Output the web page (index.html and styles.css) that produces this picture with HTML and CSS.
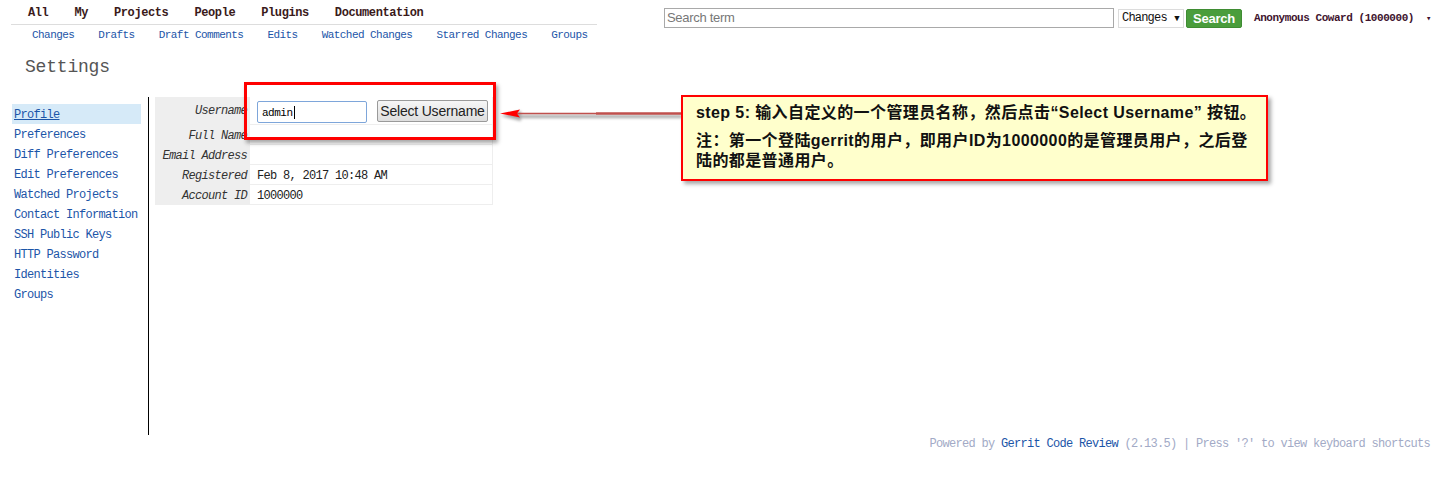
FILE: index.html
```html
<!DOCTYPE html>
<html lang="zh-CN">
<head>
<meta charset="utf-8">
<title>Settings</title>
<link rel="stylesheet" href="styles.css">
</head>
<body>
<div class="page">
  <header class="top">
    <div class="menus">
      <nav class="mainmenu">
        <a>All</a><a>My</a><a>Projects</a><a>People</a><a>Plugins</a><a>Documentation</a>
      </nav>
      <nav class="submenu">
        <a>Changes</a><a>Drafts</a><a>Draft Comments</a><a>Edits</a><a>Watched Changes</a><a>Starred Changes</a><a>Groups</a>
      </nav>
    </div>
    <div class="search">
      <div class="search-input">Search term</div>
      <div class="search-select">Changes <span class="tri">▼</span></div>
      <div class="search-btn">Search</div>
      <div class="user">Anonymous Coward (1000000)</div>
      <div class="user-arrow">▾</div>
    </div>
  </header>

  <h1 class="title">Settings</h1>

  <div class="content">
    <aside class="sidebar">
      <a class="side-item active">Profile</a>
      <a class="side-item">Preferences</a>
      <a class="side-item">Diff Preferences</a>
      <a class="side-item">Edit Preferences</a>
      <a class="side-item">Watched Projects</a>
      <a class="side-item">Contact Information</a>
      <a class="side-item">SSH Public Keys</a>
      <a class="side-item">HTTP Password</a>
      <a class="side-item">Identities</a>
      <a class="side-item">Groups</a>
    </aside>
    <div class="profile">
      <div class="row first">
        <div class="label">Username</div>
        <div class="value">
          <div class="uname-input">admin<span class="caret"></span></div>
          <div class="select-btn">Select Username</div>
        </div>
      </div>
      <div class="row">
        <div class="label">Full Name</div>
        <div class="value"></div>
      </div>
      <div class="row">
        <div class="label">Email Address</div>
        <div class="value"></div>
      </div>
      <div class="row">
        <div class="label">Registered</div>
        <div class="value">Feb 8, 2017 10:48 AM</div>
      </div>
      <div class="row">
        <div class="label">Account ID</div>
        <div class="value">1000000</div>
      </div>
    </div>
  </div>

  <footer class="footer">
    Powered by <a class="gerrit">Gerrit Code Review</a> (2.13.5) | Press '?' to view keyboard shortcuts
  </footer>

  <div class="hl-box"></div>
  <svg class="arrow" width="190" height="20" viewBox="0 0 190 20">
    <defs>
      <filter id="sh" x="-10%" y="-100%" width="120%" height="400%">
        <feGaussianBlur stdDeviation="1.5"/>
      </filter>
    </defs>
    <g filter="url(#sh)" opacity="0.35">
      <line x1="22" y1="11.5" x2="186" y2="11.5" stroke="#000" stroke-width="3"/>
      <polygon points="5,11 25,6 25,16" fill="#000"/>
    </g>
    <line x1="20" y1="8.5" x2="100" y2="8.5" stroke="#c0504d" stroke-width="1.5"/>
    <line x1="100" y1="8.5" x2="186" y2="8.5" stroke="#c0504d" stroke-width="2.5"/>
    <polygon points="4,8.5 24,4.5 21,8.5 24,12.5" fill="#ff0000"/>
  </svg>
  <div class="callout">
    <p class="c1">step 5: 输入自定义的一个管理员名称，然后点击“Select Username” 按钮。</p>
    <p class="c2">注：第一个登陆gerrit的用户，即用户ID为1000000的是管理员用户，之后登<br>陆的都是普通用户。</p>
  </div>
</div>
</body>
</html>
```

FILE: styles.css
```css
html, body {
  margin: 0;
  padding: 0;
  background: #fff;
}

.page {
  position: relative;
  width: 1440px;
  height: 488px;
  overflow: hidden;
  font-family: "Liberation Mono", "DejaVu Sans Mono", monospace;
  font-size: 12px;
  letter-spacing: -0.7px;
  color: #222;
}

a { cursor: pointer; }

/* ---------- header ---------- */
.top {
  display: flex;
  align-items: flex-start;
  height: 45px;
}

.menus {
  margin-left: 11px;
  width: 586px;
}

.mainmenu {
  display: flex;
  gap: 26px;
  box-sizing: border-box;
  height: 25px;
  padding: 6px 0 0 17px;
  line-height: 15px;
  border-bottom: 1px solid #dddddd;
  font-weight: bold;
  font-size: 12px;
  letter-spacing: -0.4px;
  color: #3a1a1a;
}

.submenu {
  display: flex;
  gap: 24px;
  height: 20px;
  align-items: center;
  padding-left: 21px;
  font-size: 11px;
  letter-spacing: -0.55px;
  color: #1c55a8;
}

.search {
  display: flex;
  align-items: center;
  margin-left: 67px;
  margin-top: 8px;
}

.search-input {
  box-sizing: border-box;
  width: 450px;
  height: 20px;
  border: 1px solid #a9a9a9;
  padding: 0 2px;
  font-family: "Liberation Sans", Arial, sans-serif;
  font-size: 13px;
  letter-spacing: -0.3px;
  line-height: 18px;
  color: #777;
}

.search-select {
  box-sizing: border-box;
  width: 66px;
  height: 19px;
  margin-left: 4px;
  border: 1px solid #dcdcdc;
  padding-left: 3px;
  font-family: "Liberation Mono", monospace;
  font-size: 12px;
  letter-spacing: -0.8px;
  line-height: 17px;
  color: #111;
  background: #fff;
}

.search-select .tri {
  font-size: 9px;
  margin-left: 1px;
}

.search-btn {
  box-sizing: border-box;
  width: 56px;
  height: 19px;
  margin-left: 2px;
  background: #4a9d3c;
  border: 1px solid #3f8c33;
  border-radius: 2px;
  color: #fff;
  font-family: "Liberation Sans", Arial, sans-serif;
  font-weight: bold;
  font-size: 13px;
  letter-spacing: -0.2px;
  line-height: 17px;
  text-align: center;
}

.user {
  margin-left: 12px;
  font-weight: bold;
  font-size: 11px;
  letter-spacing: -0.45px;
  color: #40142e;
}

.user-arrow {
  margin-left: 12px;
  font-size: 9px;
  color: #40142e;
}

/* ---------- title ---------- */
.title {
  margin: 9px 0 0 25px;
  height: 43px;
  font-weight: normal;
  font-size: 18px;
  letter-spacing: -0.2px;
  line-height: 26px;
  color: #555;
}

/* ---------- content ---------- */
.content {
  display: flex;
  height: 338px;
}

.sidebar {
  box-sizing: border-box;
  width: 149px;
  padding: 7px 7px 0 12px;
  border-right: 1px solid #000;
  display: flex;
  flex-direction: column;
}

.side-item {
  display: block;
  box-sizing: border-box;
  height: 20px;
  padding: 3px 0 0 2px;
  line-height: 17px;
  color: #1c55a8;
}

.side-item.active {
  background: #d6eaf8;
  text-decoration: underline;
}

.profile {
  margin-left: 6px;
  width: 338px;
  align-self: flex-start;
}

.row {
  display: flex;
  height: 20px;
}

.row.first {
  height: 28px;
}

.label {
  box-sizing: border-box;
  width: 95px;
  padding: 3px 3px 0 0;
  background: #eeeeee;
  text-align: right;
  font-style: italic;
  line-height: 17px;
  color: #333;
}

.row.first .label {
  padding-top: 6px;
}

.value {
  box-sizing: border-box;
  flex: 1;
  display: flex;
  align-items: center;
  padding: 2px 0 0 7px;
  border-bottom: 1px solid #eeeeee;
  border-right: 1px solid #eeeeee;
  color: #222;
}

.row.first .value {
  padding-top: 0;
}

.uname-input {
  box-sizing: border-box;
  width: 110px;
  height: 22px;
  margin-top: 2px;
  border: 1px solid #7ea6da;
  border-radius: 2px;
  padding: 2px 0 0 4px;
  font-size: 11px;
  letter-spacing: -0.5px;
  color: #000;
  display: flex;
  align-items: center;
}

.caret {
  display: inline-block;
  width: 1px;
  height: 13px;
  background: #000;
  margin-left: 1px;
}

.select-btn {
  box-sizing: border-box;
  width: 111px;
  height: 22px;
  margin-left: 10px;
  border: 1px solid #9a9a9a;
  border-radius: 2px;
  background: linear-gradient(#f6f6f6, #dedede);
  font-family: "Liberation Sans", Arial, sans-serif;
  font-size: 14px;
  letter-spacing: -0.2px;
  line-height: 20px;
  text-align: center;
  color: #222;
}

/* ---------- footer ---------- */
.footer {
  margin-top: 2px;
  padding-right: 10px;
  text-align: right;
  line-height: 14px;
  color: #a2aac6;
}

.footer .gerrit {
  color: #1c55a8;
}

/* ---------- annotations ---------- */
.hl-box {
  position: absolute;
  left: 244px;
  top: 82px;
  width: 252px;
  height: 58px;
  box-sizing: border-box;
  border: 3px solid #ff0000;
  box-shadow: 2px 3px 4px rgba(0, 0, 0, 0.35);
}

.arrow {
  position: absolute;
  left: 496px;
  top: 105px;
}

.callout {
  position: absolute;
  left: 681px;
  top: 95px;
  width: 587px;
  height: 86px;
  box-sizing: border-box;
  border: 2px solid #ff0000;
  background: #ffffcc;
  box-shadow: 3px 3px 4px rgba(0, 0, 0, 0.35);
  padding: 6px 0 0 13px;
  font-family: "Liberation Sans", "Noto Sans CJK SC", sans-serif;
  font-weight: bold;
  font-size: 16px;
  letter-spacing: 0.4px;
  color: #111;
}

.callout p {
  margin: 0;
  line-height: 20px;
  white-space: nowrap;
}

.callout .c1 {
  margin-bottom: 8px;
}
```
